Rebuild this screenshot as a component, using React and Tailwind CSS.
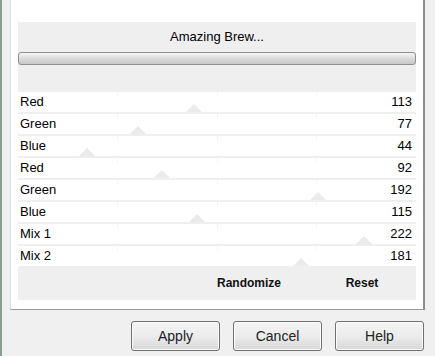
const rows = [
  { label: 'Red', value: 113 },
  { label: 'Green', value: 77 },
  { label: 'Blue', value: 44 },
  { label: 'Red', value: 92 },
  { label: 'Green', value: 192 },
  { label: 'Blue', value: 115 },
  { label: 'Mix 1', value: 222 },
  { label: 'Mix 2', value: 181 },
]

const font = { fontFamily: '"Liberation Sans", Arial, sans-serif' }

function SliderRow({ label, value }) {
  // thumb position across the 398px track
  const left = Math.round((value / 255) * 398) - 8
  return (
    <div className="mt-[2px] h-[20px] bg-white relative flex items-center justify-between pl-[2px] pr-[4px] text-[13px] text-black">
      <div className="absolute top-0 left-[99px] w-px h-[5px] bg-[#f6f6f6]" />
      <div className="absolute top-0 left-[199px] w-px h-[5px] bg-[#f4f4f4]" />
      <div className="absolute top-0 left-[298px] w-px h-[5px] bg-[#f6f6f6]" />
      <svg className="absolute bottom-0" style={{ left }} width="16" height="8" viewBox="0 0 16 8">
        <polygon points="0,8 8,0 16,8" fill="#ebebeb" />
      </svg>
      <span className="relative">{label}</span>
      <span className="relative">{value}</span>
    </div>
  )
}

function Button({ children }) {
  return (
    <button className="w-[89px] h-[30px] rounded-[3px] border border-[#707070] bg-gradient-to-b from-[#f4f4f4] via-[#ececec] to-[#d8d8d8] text-[14px] text-[#222] shadow-[inset_0_0_0_1px_#fcfcfc]">
      {children}
    </button>
  )
}

export default function App() {
  return (
    <div className="w-[435px] h-[356px] bg-[#f0f0f0] flex overflow-hidden" style={font}>
      <div className="w-[2px] h-full bg-[#86a08a]" />
      <div className="flex-1 flex flex-col">
        <div className="flex">
          <div className="ml-[8px] w-[415px] h-[310px] bg-white border-l border-[#dcdcdc] border-r-2 border-r-[#8c8c8c] border-b border-b-[#9a9a9a] pl-[7px] pt-[22px]">
            <div className="w-[398px] h-[278px] bg-[#efefef] flex flex-col">
              <div className="h-[30px] flex items-center justify-center text-[13px] text-black">Amazing Brew...</div>
              <div className="h-[13px] rounded-[3px] border border-[#8f8f8f] bg-gradient-to-b from-[#f6f6f6] via-[#dadada] to-[#c8c8c8]" />
              <div className="h-[25px]" />
              {rows.map((r, i) => (
                <SliderRow key={i} label={r.label} value={r.value} />
              ))}
              <div className="flex-1 flex items-center text-[12px] font-bold text-[#111]">
                <span className="ml-[181px] w-[100px] text-center">Randomize</span>
                <span className="ml-[33px] w-[60px] text-center">Reset</span>
              </div>
            </div>
          </div>
        </div>
        <div className="mt-[11px] ml-[129px] flex gap-[13px]">
          <Button>Apply</Button>
          <Button>Cancel</Button>
          <Button>Help</Button>
        </div>
      </div>
    </div>
  )
}
